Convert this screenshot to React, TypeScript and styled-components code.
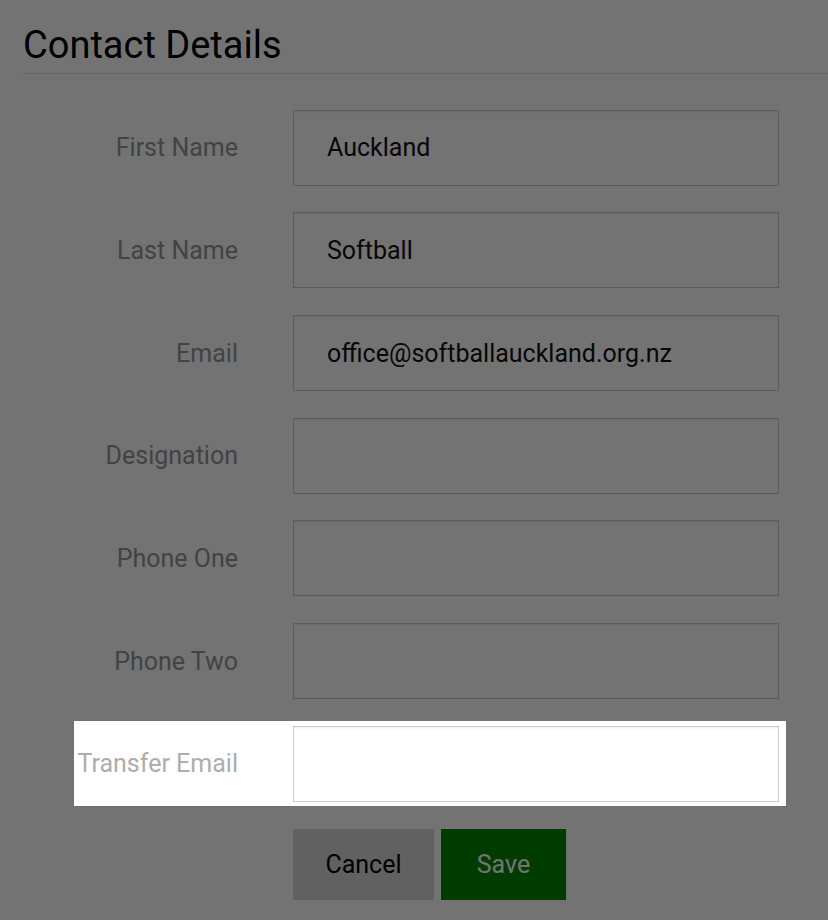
import React from "react";
import styled, { createGlobalStyle } from "styled-components";

const GlobalStyle = createGlobalStyle`
  html, body {
    margin: 0;
    padding: 0;
    background: #ffffff;
    font-family: Roboto, "Liberation Sans", Arial, sans-serif;
  }
  * {
    box-sizing: border-box;
  }
`;

const Page = styled.div`
  padding: 25px 0 0 23px;
`;

const Header = styled.header`
  border-bottom: 1px solid #e0e0e0;
  padding-bottom: 6px;
  margin-bottom: 36px;
`;

const Title = styled.h1`
  margin: 0;
  font-size: 38px;
  line-height: 1.1;
  font-weight: 400;
  color: #000;
`;

const Form = styled.form`
  display: flex;
  flex-direction: column;
  align-items: flex-start;
  gap: 26.67px;
`;

const Row = styled.div<{ $highlighted?: boolean }>`
  display: grid;
  grid-template-columns: 215px 486px;
  column-gap: 55px;
  align-items: center;
  position: relative;
  z-index: ${(p) => (p.$highlighted ? 11 : "auto")};

  ${(p) =>
    p.$highlighted &&
    `
    &::before {
      content: "";
      position: absolute;
      top: -5px;
      bottom: -4px;
      left: 51px;
      right: -7px;
      background: #ffffff;
      z-index: -1;
    }
  `}
`;

const Label = styled.label<{ $highlighted?: boolean }>`
  text-align: right;
  font-size: 25px;
  color: ${(p) => (p.$highlighted ? "#adadad" : "#949494")};
  white-space: nowrap;
`;

const Input = styled.input`
  height: 76px;
  width: 100%;
  border: 1px solid #cccccc;
  box-shadow: inset 0 1px 2px rgba(0, 0, 0, 0.075);
  padding: 0 0 0 33px;
  font-family: Roboto, "Liberation Sans", Arial, sans-serif;
  font-size: 25px;
  color: #111;
  background: #fff;
  outline: none;
`;

const Actions = styled.div`
  display: flex;
  gap: 7px;
  margin: 27px 0 0 270px;
`;

const Button = styled.button<{ $variant: "cancel" | "save" }>`
  height: 71px;
  width: ${(p) => (p.$variant === "cancel" ? "141px" : "125px")};
  border: none;
  font-family: Roboto, "Liberation Sans", Arial, sans-serif;
  font-size: 25px;
  background: ${(p) => (p.$variant === "cancel" ? "#d8d8d8" : "#008500")};
  color: ${(p) => (p.$variant === "cancel" ? "#000" : "#fff")};
  cursor: pointer;
`;

const Overlay = styled.div`
  position: fixed;
  inset: 0;
  background: rgba(0, 0, 0, 0.55);
  z-index: 10;
`;

const fields = [
  { label: "First Name", value: "Auckland" },
  { label: "Last Name", value: "Softball" },
  { label: "Email", value: "office@softballauckland.org.nz" },
  { label: "Designation", value: "" },
  { label: "Phone One", value: "" },
  { label: "Phone Two", value: "" },
];

export default function App() {
  return (
    <>
      <GlobalStyle />
      <Page>
        <Header>
          <Title>Contact Details</Title>
        </Header>
        <Form onSubmit={(e) => e.preventDefault()}>
          {fields.map((f) => (
            <Row key={f.label}>
              <Label>{f.label}</Label>
              <Input defaultValue={f.value} />
            </Row>
          ))}
          <Row $highlighted>
            <Label $highlighted>Transfer Email</Label>
            <Input defaultValue="" />
          </Row>
        </Form>
        <Actions>
          <Button type="button" $variant="cancel">
            Cancel
          </Button>
          <Button type="button" $variant="save">
            Save
          </Button>
        </Actions>
      </Page>
      <Overlay />
    </>
  );
}
